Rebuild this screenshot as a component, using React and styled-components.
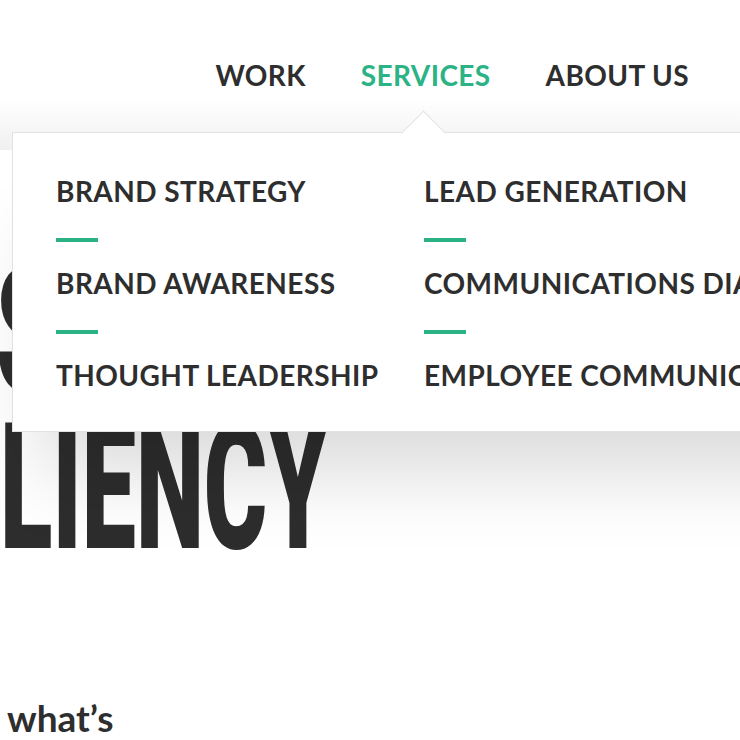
import React from "react";
import styled, { createGlobalStyle } from "styled-components";

const GlobalStyle = createGlobalStyle`
  html, body {
    margin: 0;
    padding: 0;
    background: #ffffff;
    overflow: hidden;
    width: 740px;
    height: 740px;
  }
  body {
    font-family: Lato, "Noto Sans", sans-serif;
    color: #2e2e2e;
  }
`;

const Page = styled.div`
  position: relative;
  width: 740px;
  height: 740px;
  overflow: hidden;
`;

const Header = styled.header`
  position: relative;
  height: 150px;
  background: linear-gradient(to bottom, #ffffff 0%, #ffffff 66%, #f0f0f0 100%);
  z-index: 2;
`;

const Nav = styled.nav`
  display: flex;
  justify-content: flex-end;
  gap: 55px;
  padding: 61px 51px 0 0;
`;

const NavLink = styled.a`
  font-family: Lato, sans-serif;
  font-weight: 700;
  font-size: 28px;
  line-height: 28px;
  letter-spacing: 0.4px;
  color: ${(p) => (p.$active ? "#2bb386" : "#2e2e2e")};
  text-decoration: none;
  white-space: nowrap;
`;

const Dropdown = styled.div`
  position: absolute;
  top: 132px;
  left: 12px;
  width: 880px;
  height: 300px;
  box-sizing: border-box;
  background: #ffffff;
  border: 1px solid #e2e2e2;
  box-shadow: 0 70px 80px -30px rgba(0, 0, 0, 0.15);
  padding: 44px 0 0 43px;
  display: grid;
  grid-template-columns: 368px 1fr;
`;

const Caret = styled.span`
  position: absolute;
  top: -16.5px;
  left: 394.5px;
  width: 31px;
  height: 31px;
  box-sizing: border-box;
  background: #ffffff;
  border-top: 1px solid #e2e2e2;
  border-left: 1px solid #e2e2e2;
  transform: rotate(45deg);
`;

const Column = styled.ul`
  list-style: none;
  margin: 0;
  padding: 0;
  display: flex;
  flex-direction: column;
`;

const MenuItem = styled.li`
  font-family: Lato, sans-serif;
  font-weight: 700;
  font-size: 28px;
  line-height: 28px;
  letter-spacing: 0.45px;
  color: #2e2e2e;
  white-space: nowrap;
`;

const Dash = styled.li`
  width: 42px;
  height: 4px;
  background: #2bb386;
  margin: 33px 0 27px;
`;

const Hero = styled.section`
  padding: 104px 0 0 0;
`;

const BigLine = styled.h1`
  margin: 0 0 0 ${(p) => p.$shift}px;
  font-family: Roboto, "Liberation Sans", sans-serif;
  font-weight: 900;
  font-size: 176px;
  line-height: 156px;
  letter-spacing: 0px;
  color: #2d2d2d;
  white-space: nowrap;
  transform: scaleX(0.55);
  transform-origin: left center;
`;

const Lead = styled.p`
  margin: 133px 0 0 7px;
  font-family: Lato, sans-serif;
  font-weight: 700;
  font-size: 37px;
  line-height: 38px;
  color: #2e2e2e;
`;

const left = ["BRAND STRATEGY", "BRAND AWARENESS", "THOUGHT LEADERSHIP"];
const right = ["LEAD GENERATION", "COMMUNICATIONS DIAGNOSTICS", "EMPLOYEE COMMUNICATIONS"];

function MenuColumn({ items }) {
  return (
    <Column>
      {items.map((t, i) => (
        <React.Fragment key={t}>
          {i > 0 && <Dash aria-hidden="true" />}
          <MenuItem>{t}</MenuItem>
        </React.Fragment>
      ))}
    </Column>
  );
}

export default function App() {
  return (
    <Page>
      <GlobalStyle />
      <Header>
        <Nav>
          <NavLink href="#">WORK</NavLink>
          <NavLink href="#" $active>SERVICES</NavLink>
          <NavLink href="#">ABOUT US</NavLink>
        </Nav>
        <Dropdown>
          <Caret />
          <MenuColumn items={left} />
          <MenuColumn items={right} />
        </Dropdown>
      </Header>
      <Hero>
        <BigLine $shift={-4}>S</BigLine>
        <BigLine $shift={0}>LIENCY</BigLine>
        <Lead>what’s</Lead>
      </Hero>
    </Page>
  );
}
